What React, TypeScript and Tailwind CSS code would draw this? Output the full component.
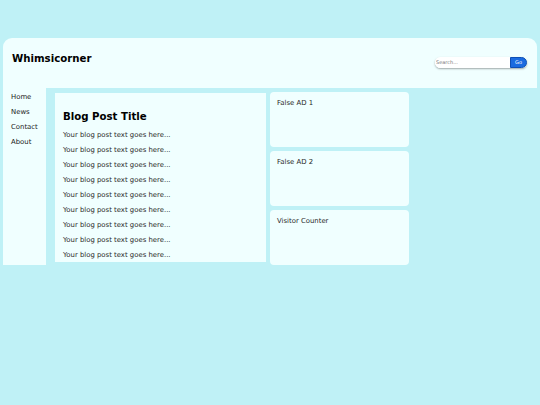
import React from 'react';

const navLinks = ['Home', 'News', 'Contact', 'About'];
const sideBoxes = ['False AD 1', 'False AD 2', 'Visitor Counter'];
const postLines = Array.from({ length: 9 }, () => 'Your blog post text goes here...');

const App: React.FC = () => {
  return (
    <div
      className="min-h-[405px] bg-[#bff1f6] pt-[38px] px-[3px] text-[#222]"
      style={{ fontFamily: '"DejaVu Sans", Verdana, sans-serif' }}
    >
      <header className="h-[50px] bg-[#f0ffff] rounded-t-[9px] flex justify-between items-start pl-[9px] pr-[10px]">
        <h1 className="mt-[15px] text-[10.2px] leading-[12px] font-bold text-black">Whimsicorner</h1>
        <form className="mt-[19px] flex items-stretch h-[11px] rounded-full shadow-[0_1px_2px_rgba(0,0,0,0.35)]">
          <input
            type="text"
            placeholder="Search..."
            className="w-[75px] bg-white rounded-l-full pl-[1px] text-[5px] leading-[11px] outline-none placeholder:text-[#777]"
          />
          <button
            type="button"
            className="w-[17px] bg-[#1a6be0] border border-[#0d4fb5] rounded-r-full text-white text-[5px] leading-[9px]"
          >
            Go
          </button>
        </form>
      </header>

      <div className="flex items-start">
        <nav className="w-[43px] h-[177px] bg-[#f0ffff] pl-[8px] pt-[1.5px]">
          <ul className="text-[6.9px] leading-[15px]">
            {navLinks.map((item) => (
              <li key={item}>
                <a href="#">{item}</a>
              </li>
            ))}
          </ul>
        </nav>

        <main className="ml-[9px] mt-[5px] w-[211px] h-[169px] bg-[#f0ffff] pt-[18px] px-[8px]">
          <h2 className="text-[10.2px] leading-[12px] font-bold text-black">Blog Post Title</h2>
          <div className="mt-[4.5px] text-[6.9px] leading-[15px] text-[#2a2a2a]">
            {postLines.map((line, i) => (
              <p key={i}>{line}</p>
            ))}
          </div>
        </main>

        <aside className="ml-[4px] mt-[4px] w-[139px] flex flex-col gap-[4px]">
          {sideBoxes.map((label) => (
            <div key={label} className="h-[55px] bg-[#f0ffff] rounded-[4px] pt-[7px] px-[7px] text-[6.9px] leading-[8px] text-[#2a2a2a]">
              {label}
            </div>
          ))}
        </aside>
      </div>
    </div>
  );
};

export default App;
